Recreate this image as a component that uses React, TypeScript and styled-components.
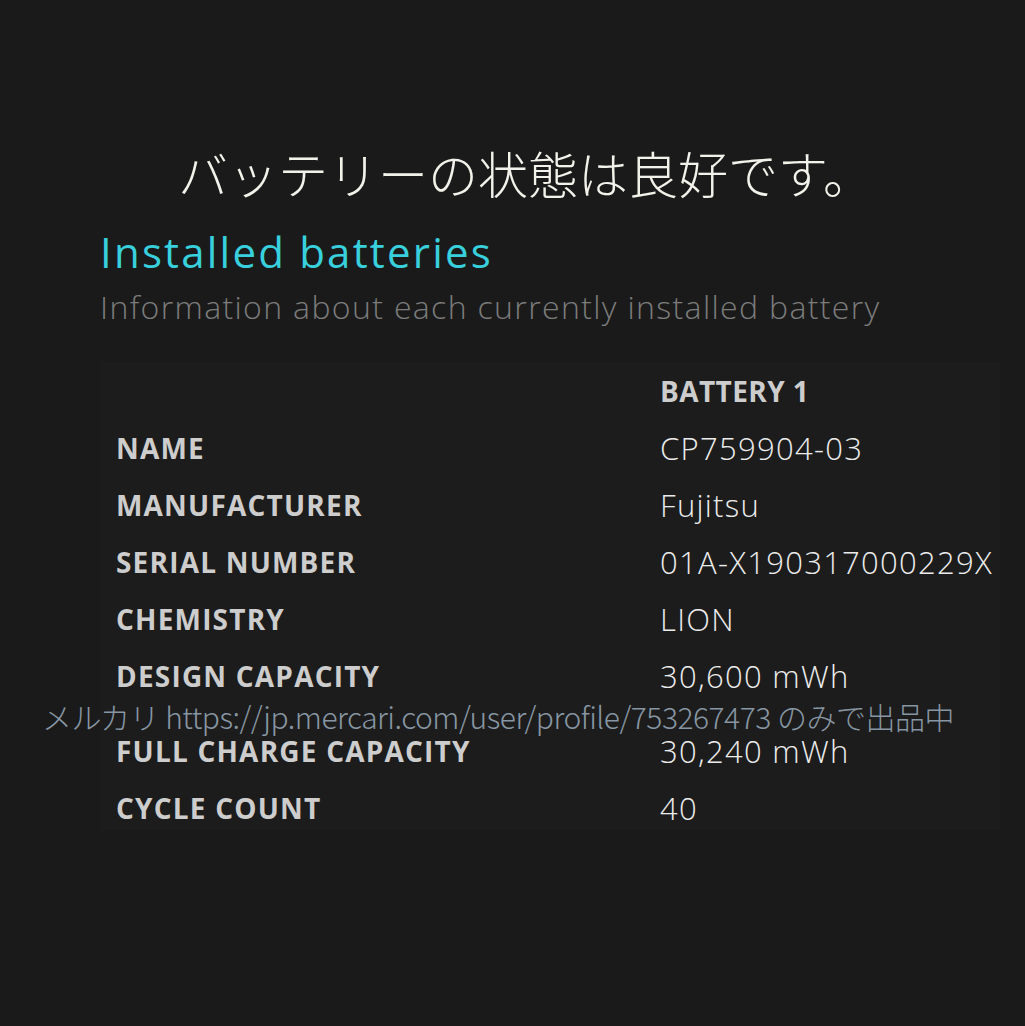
import * as React from "react";
import styled, { createGlobalStyle } from "styled-components";

const GlobalStyle = createGlobalStyle`
  html, body {
    margin: 0;
    padding: 0;
    background: #1a1a1a;
  }
  body {
    font-family: "Open Sans", "Noto Sans", sans-serif;
  }
`;

const Page = styled.main`
  position: relative;
  width: 1025px;
  height: 1026px;
  background: #1a1a1a;
  box-sizing: border-box;
  padding: 137px 0 0 100px;
  overflow: hidden;
`;

const Status = styled.h1`
  margin: 0;
  padding-left: 78px;
  color: #f2f2ea;
  font-family: "Noto Sans CJK JP", sans-serif;
  font-weight: 300;
  font-size: 50px;
  line-height: 70px;
  white-space: nowrap;
`;

const Title = styled.h2`
  margin: 18px 0 0;
  color: #38d0dc;
  font-family: "Open Sans", sans-serif;
  font-weight: 400;
  font-size: 42px;
  letter-spacing: 2.2px;
  line-height: 54px;
  white-space: nowrap;
`;

const Subtitle = styled.p`
  margin: 0;
  color: #7c7c7c;
  font-family: "Open Sans", sans-serif;
  font-weight: 300;
  font-size: 32px;
  letter-spacing: 1.35px;
  line-height: 56px;
  white-space: nowrap;
`;

const Table = styled.section`
  margin-top: 26px;
  width: 900px;
  background: #1c1c1c;
  padding: 15px 0 0 16px;
  height: 470px;
  box-sizing: border-box;
  display: grid;
  grid-template-columns: 544px 1fr;
  row-gap: 27px;
  align-content: start;
`;

const Row = styled.div<{ $extra?: number }>`
  display: contents;
  & > * {
    margin-top: ${(p) => p.$extra ?? 0}px;
  }
`;

const Label = styled.div`
  color: #cdcdcd;
  font-family: "Open Sans", sans-serif;
  font-weight: 700;
  font-size: 28px;
  letter-spacing: 1.2px;
  line-height: 30px;
  white-space: nowrap;
`;

const Value = styled.div<{ $head?: boolean }>`
  color: ${(p) => (p.$head ? "#cdcdcd" : "#ececec")};
  font-family: "Open Sans", sans-serif;
  font-weight: ${(p) => (p.$head ? 700 : 300)};
  font-size: ${(p) => (p.$head ? 28 : 31)}px;
  letter-spacing: ${(p) => (p.$head ? 0.4 : 1.3)}px;
  line-height: 30px;
  white-space: nowrap;
`;

const Watermark = styled.div`
  position: absolute;
  left: 42px;
  top: 701px;
  color: #8796a3;
  font-family: "Noto Sans CJK JP", sans-serif;
  font-weight: 300;
  font-size: 30px;
  line-height: 30px;
  letter-spacing: -0.5px;
  white-space: nowrap;
`;

const rows: [string, string, number?][] = [
  ["NAME", "CP759904-03"],
  ["MANUFACTURER", "Fujitsu"],
  ["SERIAL NUMBER", "01A-X190317000229X"],
  ["CHEMISTRY", "LION"],
  ["DESIGN CAPACITY", "30,600 mWh"],
  ["FULL CHARGE CAPACITY", "30,240 mWh", 18],
  ["CYCLE COUNT", "40"],
];

export default function App() {
  return (
    <Page>
      <GlobalStyle />
      <Status>バッテリーの状態は良好です。</Status>
      <Title>Installed batteries</Title>
      <Subtitle>Information about each currently installed battery</Subtitle>
      <Table>
        <Row>
          <Label />
          <Value $head>BATTERY 1</Value>
        </Row>
        {rows.map(([label, value, extra]) => (
          <Row key={label} $extra={extra}>
            <Label>{label}</Label>
            <Value>{value}</Value>
          </Row>
        ))}
      </Table>
      <Watermark>メルカリ https://jp.mercari.com/user/profile/753267473 のみで出品中</Watermark>
    </Page>
  );
}
